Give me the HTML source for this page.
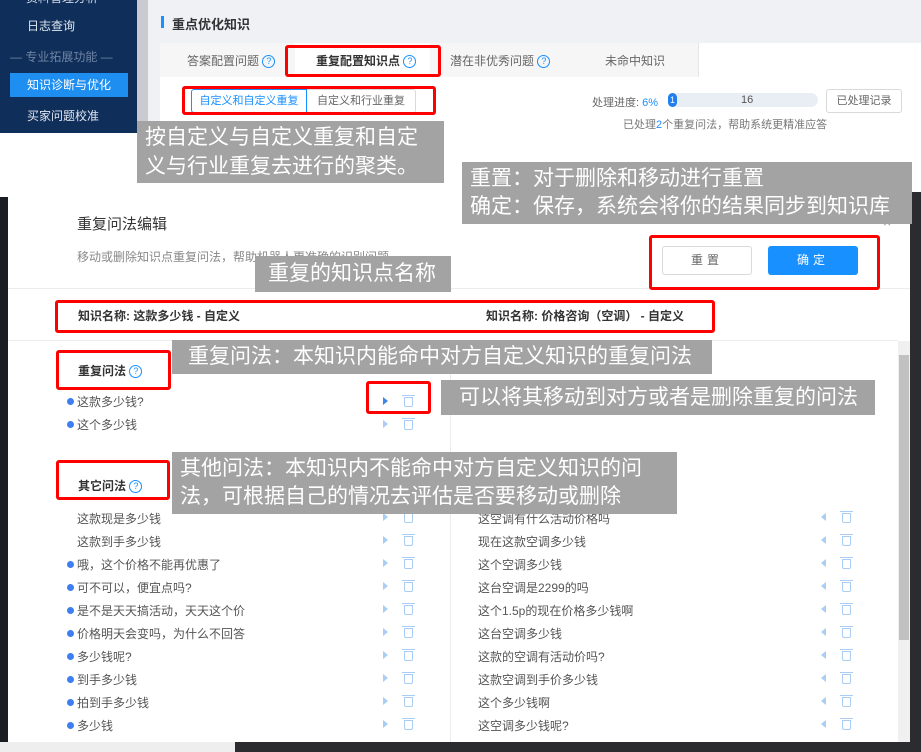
<!DOCTYPE html>
<html><head><meta charset="utf-8"><style>
*{margin:0;padding:0;box-sizing:border-box}
body{width:921px;height:752px;overflow:hidden;position:relative;background:#fff;font-family:"Liberation Sans","Noto Sans CJK SC",sans-serif;font-size:12px;color:#333}
.a{position:absolute}
.ann{position:absolute;background:#a3a3a3;color:#fff;font-size:21px;line-height:30px;padding:0 8px;white-space:nowrap;overflow:hidden}
.red{position:absolute;border:3px solid #f00;border-radius:3px}
.q{display:inline-block;width:13px;height:13px;border:1.3px solid #1890ff;border-radius:50%;color:#1890ff;font-size:9px;line-height:11px;text-align:center;font-weight:normal;vertical-align:1px}
.row{position:absolute;font-size:12px;color:#555;white-space:nowrap}
.dot{position:absolute;width:7px;height:7px;border-radius:50%;background:#3d7ef0}
.ar{position:absolute;width:0;height:0;border-top:4px solid transparent;border-bottom:4px solid transparent}
.tr{position:absolute;width:9px;height:10px;border:1.3px solid #a9cdf5;border-radius:0 0 2px 2px}
.tr:before{content:"";position:absolute;left:-3px;top:-3px;width:13px;border-top:1.3px solid #a9cdf5}
</style></head><body>
<div class="a" style="left:0;top:0;width:137px;height:133px;background:#0f2f5a"></div>
<div class="a" style="left:137px;top:0;width:11px;height:133px;background:#c9cbd0"></div>
<div class="a" style="left:148px;top:0;width:773px;height:160px;background:#f0f1f5"></div>
<div class="a" style="left:26px;top:-11px;color:#cfd8e6;font-size:12px">资料管理分析</div>
<div class="a" style="left:27px;top:17px;color:#dfe6f0;font-size:12px">日志查询</div>
<div class="a" style="left:10px;top:48px;color:#6f83a3;font-size:12px">— 专业拓展功能 —</div>
<div class="a" style="left:10px;top:73px;width:118px;height:24px;background:#1f8ef1;color:#fff;font-size:12px;line-height:24px;padding-left:17px">知识诊断与优化</div>
<div class="a" style="left:27px;top:107px;color:#dfe6f0;font-size:12px">买家问题校准</div>
<div class="a" style="left:161px;top:16px;width:3px;height:12px;background:#1890ff"></div>
<div class="a" style="left:172px;top:14px;font-size:13px;font-weight:bold;color:#333">重点优化知识</div>
<div class="a" style="left:160px;top:43px;width:538px;height:34px;background:#f6f6f7"></div>
<div class="a" style="left:698px;top:43px;width:223px;height:34px;background:#fff;border-left:1px solid #e6e6e6"></div>
<div class="a" style="left:295px;top:43px;width:135px;height:34px;background:#fff"></div>
<div class="a" style="left:160px;top:77px;width:761px;height:83px;background:#fff"></div>
<div class="a" style="left:187px;top:52px;font-size:12px;color:#666">答案配置问题 <span class="q">?</span></div>
<div class="a" style="left:316px;top:52px;font-size:12px;color:#333;font-weight:bold">重复配置知识点 <span class="q">?</span></div>
<div class="a" style="left:450px;top:52px;font-size:12px;color:#666">潜在非优秀问题 <span class="q">?</span></div>
<div class="a" style="left:605px;top:52px;font-size:12px;color:#666">未命中知识</div>
<div class="a" style="left:191px;top:89px;width:116px;height:24px;border:1px solid #1890ff;border-radius:3px 0 0 3px;color:#1890ff;font-size:11px;line-height:22px;text-align:center;background:#fff">自定义和自定义重复</div>
<div class="a" style="left:307px;top:89px;width:109px;height:24px;border:1px solid #d9d9d9;border-left:none;border-radius:0 3px 3px 0;color:#666;font-size:11px;line-height:22px;text-align:center">自定义和行业重复</div>
<div class="a" style="left:592px;top:94px;font-size:11px;color:#666">处理进度: <span style="color:#1890ff">6%</span></div>
<div class="a" style="left:668px;top:93px;width:150px;height:14px;border-radius:7px;background:#e9eef5"></div>
<div class="a" style="left:668px;top:93px;width:9px;height:14px;border-radius:5px;background:#1f7ff0;color:#fff;font-size:9px;line-height:14px;text-align:center">1</div>
<div class="a" style="left:741px;top:94px;font-size:11px;color:#555">16</div>
<div class="a" style="left:826px;top:89px;width:76px;height:24px;border:1px solid #d9d9d9;border-radius:3px;font-size:11px;color:#666;line-height:22px;text-align:center">已处理记录</div>
<div class="a" style="left:623px;top:116px;font-size:11px;color:#777">已处理<span style="color:#1890ff">2</span>个重复问法，帮助系统更精准应答</div>

<div class="a" style="left:0;top:197px;width:8px;height:555px;background:#1a1d22"></div>
<div class="a" style="left:910px;top:192px;width:11px;height:560px;background:#2a2c30"></div>
<div class="a" style="left:0;top:742px;width:921px;height:10px;background:#2a2c30"></div>
<div class="a" style="left:0;top:742px;width:235px;height:10px;background:#eee"></div>
<div class="a" style="left:8px;top:192px;width:902px;height:550px;background:#fff"></div>
<div class="a" style="left:77px;top:213px;font-size:15px;color:#333">重复问法编辑</div>
<div class="a" style="left:77px;top:248px;font-size:12px;color:#888">移动或删除知识点重复问法，帮助机器人更准确的识别问题</div>
<div class="a" style="left:883px;top:214px;font-size:14px;color:#999">×</div>
<div class="a" style="left:662px;top:246px;width:90px;height:29px;border:1px solid #d9d9d9;border-radius:3px;color:#666;font-size:12px;line-height:27px;text-align:center;letter-spacing:4px">重置</div>
<div class="a" style="left:768px;top:246px;width:90px;height:29px;background:#1890ff;border-radius:3px;color:#fff;font-size:12px;line-height:29px;text-align:center;letter-spacing:4px">确定</div>
<div class="a" style="left:8px;top:288px;width:902px;height:1px;background:#ececec"></div>
<div class="a" style="left:78px;top:307px;font-size:12px;font-weight:bold;color:#333">知识名称: 这款多少钱 - 自定义</div>
<div class="a" style="left:486px;top:307px;font-size:12px;font-weight:bold;color:#333">知识名称: 价格咨询（空调） - 自定义</div>
<div class="a" style="left:8px;top:340px;width:890px;height:1px;background:#ececec"></div>
<div class="a" style="left:450px;top:341px;width:1px;height:401px;background:#ececec"></div>
<div class="a" style="left:898px;top:341px;width:12px;height:401px;background:#f0f0f0"></div>
<div class="a" style="left:899px;top:355px;width:10px;height:285px;background:#c1c1c1"></div>
<div class="a" style="left:78px;top:362px;font-size:12px;font-weight:bold;color:#333">重复问法 <span class="q">?</span></div>
<div class="a" style="left:78px;top:477px;font-size:12px;font-weight:bold;color:#333">其它问法 <span class="q">?</span></div>

<div class="dot" style="left:67px;top:398px"></div><div class="row" style="left:77px;top:393px">这款多少钱?</div>
<div class="dot" style="left:67px;top:421px"></div><div class="row" style="left:77px;top:416px">这个多少钱</div>
<div class="ar" style="left:383px;top:397px;border-left:5px solid #3d86e8"></div><div class="tr" style="left:404px;top:397px"></div>
<div class="ar" style="left:383px;top:420px;border-left:5px solid #a9cdf5"></div><div class="tr" style="left:404px;top:420px"></div>

<div class="row" style="left:77px;top:510px">这款现是多少钱</div>
<div class="row" style="left:77px;top:533px">这款到手多少钱</div>
<div class="dot" style="left:67px;top:561px"></div><div class="row" style="left:77px;top:556px">哦，这个价格不能再优惠了</div>
<div class="dot" style="left:67px;top:584px"></div><div class="row" style="left:77px;top:579px">可不可以，便宜点吗?</div>
<div class="dot" style="left:67px;top:607px"></div><div class="row" style="left:77px;top:602px">是不是天天搞活动，天天这个价</div>
<div class="dot" style="left:67px;top:630px"></div><div class="row" style="left:77px;top:625px">价格明天会变吗，为什么不回答</div>
<div class="dot" style="left:67px;top:653px"></div><div class="row" style="left:77px;top:648px">多少钱呢?</div>
<div class="dot" style="left:67px;top:676px"></div><div class="row" style="left:77px;top:671px">到手多少钱</div>
<div class="dot" style="left:67px;top:699px"></div><div class="row" style="left:77px;top:694px">拍到手多少钱</div>
<div class="dot" style="left:67px;top:722px"></div><div class="row" style="left:77px;top:717px">多少钱</div>
<div class="row" style="left:478px;top:510px">这空调有什么活动价格吗</div>
<div class="row" style="left:478px;top:533px">现在这款空调多少钱</div>
<div class="row" style="left:478px;top:556px">这个空调多少钱</div>
<div class="row" style="left:478px;top:579px">这台空调是2299的吗</div>
<div class="row" style="left:478px;top:602px">这个1.5p的现在价格多少钱啊</div>
<div class="row" style="left:478px;top:625px">这台空调多少钱</div>
<div class="row" style="left:478px;top:648px">这款的空调有活动价吗?</div>
<div class="row" style="left:478px;top:671px">这款空调到手价多少钱</div>
<div class="row" style="left:478px;top:694px">这个多少钱啊</div>
<div class="row" style="left:478px;top:717px">这空调多少钱呢?</div>
<div class="ar" style="left:383px;top:513px;border-left:5px solid #a9cdf5"></div><div class="tr" style="left:404px;top:513px"></div>
<div class="ar" style="left:383px;top:536px;border-left:5px solid #a9cdf5"></div><div class="tr" style="left:404px;top:536px"></div>
<div class="ar" style="left:383px;top:559px;border-left:5px solid #a9cdf5"></div><div class="tr" style="left:404px;top:559px"></div>
<div class="ar" style="left:383px;top:582px;border-left:5px solid #a9cdf5"></div><div class="tr" style="left:404px;top:582px"></div>
<div class="ar" style="left:383px;top:605px;border-left:5px solid #a9cdf5"></div><div class="tr" style="left:404px;top:605px"></div>
<div class="ar" style="left:383px;top:628px;border-left:5px solid #a9cdf5"></div><div class="tr" style="left:404px;top:628px"></div>
<div class="ar" style="left:383px;top:651px;border-left:5px solid #a9cdf5"></div><div class="tr" style="left:404px;top:651px"></div>
<div class="ar" style="left:383px;top:674px;border-left:5px solid #a9cdf5"></div><div class="tr" style="left:404px;top:674px"></div>
<div class="ar" style="left:383px;top:697px;border-left:5px solid #a9cdf5"></div><div class="tr" style="left:404px;top:697px"></div>
<div class="ar" style="left:383px;top:720px;border-left:5px solid #a9cdf5"></div><div class="tr" style="left:404px;top:720px"></div>
<div class="ar" style="left:821px;top:513px;border-right:5px solid #a9cdf5"></div><div class="tr" style="left:842px;top:513px"></div>
<div class="ar" style="left:821px;top:536px;border-right:5px solid #a9cdf5"></div><div class="tr" style="left:842px;top:536px"></div>
<div class="ar" style="left:821px;top:559px;border-right:5px solid #a9cdf5"></div><div class="tr" style="left:842px;top:559px"></div>
<div class="ar" style="left:821px;top:582px;border-right:5px solid #a9cdf5"></div><div class="tr" style="left:842px;top:582px"></div>
<div class="ar" style="left:821px;top:605px;border-right:5px solid #a9cdf5"></div><div class="tr" style="left:842px;top:605px"></div>
<div class="ar" style="left:821px;top:628px;border-right:5px solid #a9cdf5"></div><div class="tr" style="left:842px;top:628px"></div>
<div class="ar" style="left:821px;top:651px;border-right:5px solid #a9cdf5"></div><div class="tr" style="left:842px;top:651px"></div>
<div class="ar" style="left:821px;top:674px;border-right:5px solid #a9cdf5"></div><div class="tr" style="left:842px;top:674px"></div>
<div class="ar" style="left:821px;top:697px;border-right:5px solid #a9cdf5"></div><div class="tr" style="left:842px;top:697px"></div>
<div class="ar" style="left:821px;top:720px;border-right:5px solid #a9cdf5"></div><div class="tr" style="left:842px;top:720px"></div>

<div class="red" style="left:285px;top:45px;width:156px;height:32px"></div>
<div class="red" style="left:182px;top:86px;width:254px;height:29px"></div>
<div class="red" style="left:649px;top:235px;width:231px;height:55px"></div>
<div class="red" style="left:55px;top:300px;width:660px;height:33px"></div>
<div class="red" style="left:56px;top:350px;width:115px;height:40px"></div>
<div class="red" style="left:366px;top:381px;width:65px;height:33px"></div>
<div class="red" style="left:56px;top:460px;width:114px;height:40px"></div>

<div class="ann" style="left:137px;top:121px;width:307px;height:62px;line-height:29px;padding-top:2px">按自定义与自定义重复和自定<br>义与行业重复去进行的聚类。</div>
<div class="ann" style="left:462px;top:162px;width:450px;height:62px;line-height:28px;padding-top:3px">重置：对于删除和移动进行重置<br>确定：保存，系统会将你的结果同步到知识库</div>
<div class="ann" style="left:255px;top:256px;width:196px;height:36px;line-height:36px;padding-left:13px">重复的知识点名称</div>
<div class="ann" style="left:172px;top:340px;width:540px;height:34px;line-height:34px;padding-left:16px">重复问法：本知识内能命中对方自定义知识的重复问法</div>
<div class="ann" style="left:441px;top:380px;width:434px;height:35px;line-height:35px;padding-left:18px">可以将其移动到对方或者是删除重复的问法</div>
<div class="ann" style="left:172px;top:452px;width:505px;height:62px;line-height:28px;padding-top:3px">其他问法：本知识内不能命中对方自定义知识的问<br>法，可根据自己的情况去评估是否要移动或删除</div>
</body></html>
